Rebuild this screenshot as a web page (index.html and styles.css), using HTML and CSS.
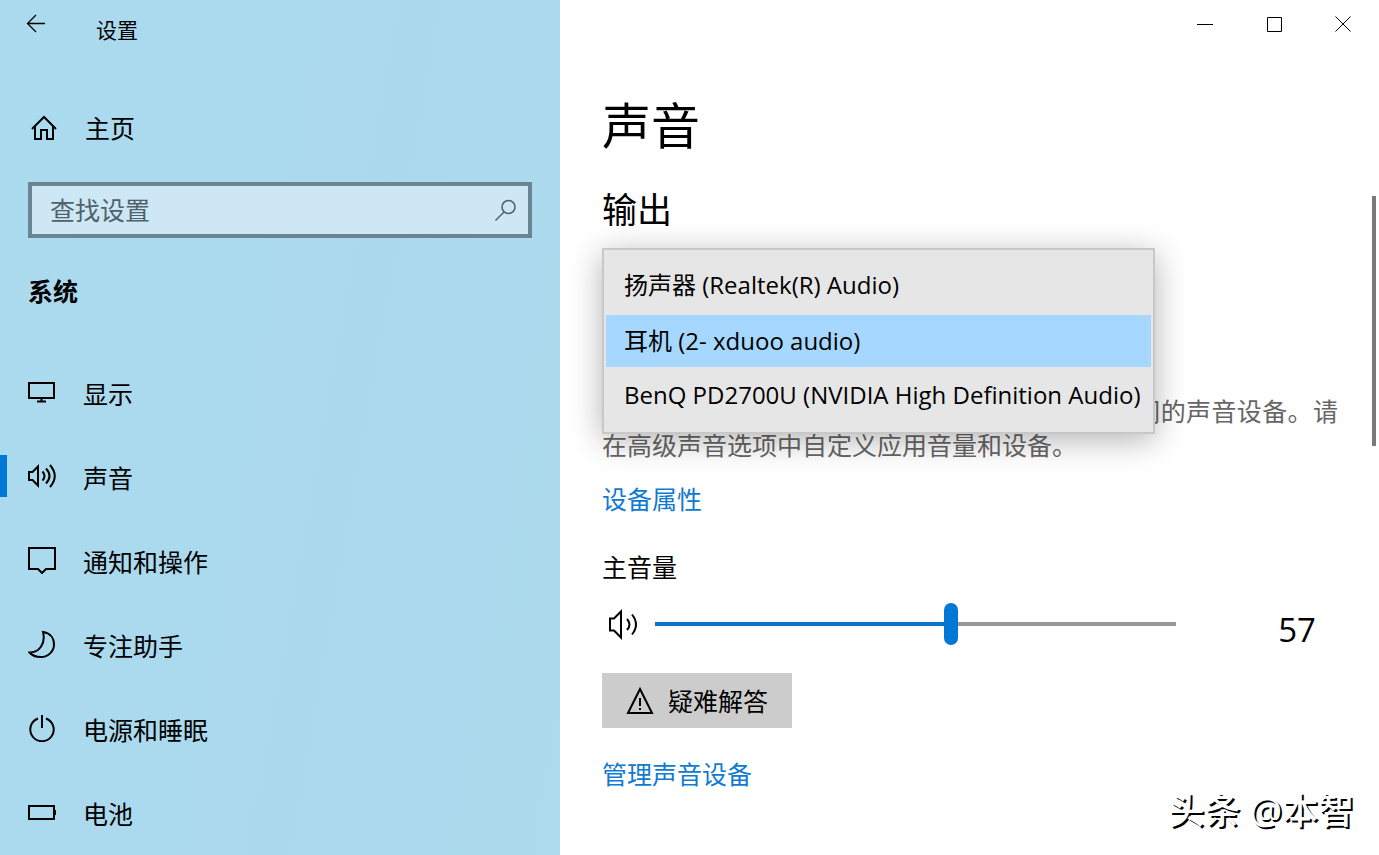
FILE: index.html
```html
<!DOCTYPE html>
<html lang="zh-CN">
<head>
	<meta charset="UTF-8">
	<title>设置</title>
	<link rel="stylesheet" href="styles.css">
</head>
<body>
	<aside class="sidebar">
		<header class="titlebar">
			<button class="back" aria-label="返回">
				<svg width="20" height="20" viewBox="0 0 20 20"><path d="M19 9.500H1.500M10 1L1.500 9.500 10 18"/></svg>
			</button>
			<span class="app-name">设置</span>
		</header>

		<a class="home" href="#home">
			<svg width="28" height="28" viewBox="0 0 28 28"><path d="M2 15L14 3l12 12M5 12.500V25h6v-9h6v9h6V12.500"/></svg>
			主页
		</a>

		<div class="search">
			<input type="search" placeholder="查找设置" aria-label="查找设置">
			<svg width="24" height="24" viewBox="0 0 24 24"><circle cx="15.500" cy="9" r="6.500"/><path d="M11 14l-8.500 8.500"/></svg>
		</div>

		<h2>系统</h2>

		<nav>
			<a href="#display">
				<svg width="28" height="28" viewBox="0 0 28 28"><path d="M1 5h25v15H1zM13.500 20v3M9 23.500h9"/></svg>
				<span>显示</span>
			</a>
			<a class="active" href="#sound">
				<svg width="28" height="28" viewBox="0 0 28 28"><path d="M1 10h3.500L10 4.500v19L4.500 18H1zM14.500 9.500q4 4.500 0 9M18 6.500q7 7.500 0 15M22 3q9.500 11 0 22"/></svg>
				<span>声音</span>
			</a>
			<a href="#notifications">
				<svg width="28" height="28" viewBox="0 0 28 28"><path d="M1 2h26v21h-9l-4 4L10 23H1z"/></svg>
				<span>通知和操作</span>
			</a>
			<a href="#focus">
				<svg width="28" height="28" viewBox="0 0 28 28"><path d="M15 2C22 3 26 8 26 14.500 26 21.500 20 27 13 27 8.500 27 4 25.500 1.500 22.500 11 22.500 18 14 15 2z"/></svg>
				<span>专注助手</span>
			</a>
			<a href="#power">
				<svg width="28" height="28" viewBox="0 0 28 28"><path d="M14 1v13M10 4.500A11.700 11.700 0 1 0 18 4.500"/></svg>
				<span>电源和睡眠</span>
			</a>
			<a href="#battery">
				<svg width="28" height="28" viewBox="0 0 28 28"><path d="M1 8h25v13H1zM27 12v5"/></svg>
				<span>电池</span>
			</a>
		</nav>
	</aside>

	<main>
		<div class="window-controls">
			<button aria-label="最小化"><svg width="16" height="16" viewBox="0 0 16 16"><path d="M0 8.500h16"/></svg></button>
			<button aria-label="最大化"><svg width="16" height="16" viewBox="0 0 16 16"><path d="M1.500 1.500h14v14h-14z"/></svg></button>
			<button aria-label="关闭"><svg width="16" height="16" viewBox="0 0 16 16"><path d="M.5.5l15 15M15.500.5l-15 15"/></svg></button>
		</div>

		<div class="content">
			<h1>声音</h1>
			<h3><label for="output">输出</label></h3>

			<div class="output">
				<select id="output" size="3">
					<option>扬声器 (Realtek(R) Audio)</option>
					<option selected>耳机 (2- xduoo audio)</option>
					<option>BenQ PD2700U (NVIDIA High Definition Audio)</option>
				</select>
			</div>

			<p class="hint">某些应用可能设为使用与此处所选的声音设备不同的声音设备。请在高级声音选项中自定义应用音量和设备。</p>
			<a class="link" href="#device">设备属性</a>

			<label class="volume-label" for="volume">主音量</label>
			<div class="volume">
				<svg width="32" height="32" viewBox="0 0 32 32"><path d="M2 10.500h4l7-7v26l-7-7H2zM19 11q5 5.500 0 11M24 6.500q8 10 0 20"/></svg>
				<input type="range" id="volume" min="0" max="100" value="57">
				<output for="volume">57</output>
			</div>

			<button class="troubleshoot">
				<svg width="28" height="28" viewBox="0 0 28 28"><path d="M14 2l12 24H2zM14 11v8M14 21v2"/></svg>
				疑难解答
			</button>
			<a class="link" href="#manage">管理声音设备</a>
		</div>

		<div class="scrollbar"></div>
		<div class="watermark">头条 @本智</div>
	</main>

	<script>
		const volume = document.getElementById('volume');
		const output = document.querySelector('output');

		volume.oninput = () => {
			volume.style.setProperty('--value', volume.value + '%');
			output.textContent = volume.value;
		};
	</script>
</body>
</html>
```
FILE: styles.css
```css
* {
	box-sizing: border-box;
}
body {
	margin: 0;
	min-height: 100vh;
	display: grid;
	grid-template-columns: 560px 1fr;
	font-family: "Open Sans", "Noto Sans CJK SC", sans-serif;
	font-size: 25px;
	line-height: 34px;
	color: #000;
	background: #fff;
}
svg {
	fill: none;
	stroke: currentColor;
	stroke-width: 2;
	flex-shrink: 0;
}
button {
	font: inherit;
	color: inherit;
	border: none;
	background: none;
	padding: 0;
}
a {
	color: inherit;
	text-decoration: none;
}
h1, h2, h3, p {
	margin: 0;
}

.sidebar {
	background: linear-gradient(100deg, #abdbef, #abd8ed 60%, #aedcee);
}
.titlebar {
	display: flex;
	height: 60px;
	padding-left: 26px;
}
.back {
	width: 20px;
	height: 48px;
}
.back svg {
	display: block;
	stroke-width: 1.3;
}
.app-name {
	margin-left: 50px;
	font-size: 21px;
	line-height: 60px;
}
.home {
	display: flex;
	align-items: center;
	gap: 27px;
	height: 84px;
	margin-top: 26px;
	padding-left: 30px;
}
.search {
	display: flex;
	align-items: center;
	height: 56px;
	margin: 12px 28px 0;
	padding: 0 11px 0 18px;
	border: 4px solid #698591;
	background: #cde7f4;
	color: #4f616a;
}
.search input {
	flex: 1;
	min-width: 0;
	padding: 0;
	border: none;
	outline: none;
	background: none;
	font: inherit;
	color: inherit;
}
.search input::placeholder {
	color: #4f616a;
}
.search svg {
	stroke-width: 1.5;
}
.sidebar h2 {
	margin: 36px 28px 42px;
	font-size: 25px;
	line-height: 34px;
}
nav a {
	display: flex;
	align-items: center;
	gap: 27px;
	height: 84px;
	padding-left: 28px;
	position: relative;
}
nav span {
	padding-top: 3px;
}
.active::before {
	content: "";
	position: absolute;
	left: 0;
	top: 21px;
	width: 7px;
	height: 42px;
	background: #0078d7;
}

main {
	position: relative;
}
.window-controls {
	display: flex;
	justify-content: flex-end;
	height: 48px;
	padding-right: 2px;
}
.window-controls button {
	width: 69px;
}
.window-controls svg {
	display: block;
	margin: auto;
	stroke-width: 1;
}
.content {
	padding: 43px 41px 0 42px;
}
h1 {
	font-size: 49px;
	font-weight: normal;
	line-height: 68px;
}
h3 {
	margin-top: 26px;
	font-size: 35px;
	font-weight: normal;
	line-height: 50px;
}

/* the open list hangs over the text below it */
.output {
	position: relative;
	height: 159px;
}
.output select {
	position: absolute;
	top: 13px;
	left: 0;
	width: 553px;
	height: 186px;
	padding: 9px 2px;
	border: 2px solid #c8c8c8;
	border-radius: 0;
	outline: none;
	overflow: hidden;
	appearance: none;
	background: #e6e6e6;
	box-shadow: 0 6px 30px rgba(0, 0, 0, 0.3);
	font: inherit;
	font-size: 24px;
	color: #000;
}
.output option {
	height: 52px;
	margin-bottom: 4px;
	padding: 7px 18px;
	color: #000;
}
.output option:checked {
	background: #a6d8ff linear-gradient(#a6d8ff, #a6d8ff);
}
.hint {
	color: #666;
	text-align: justify;
}
.link {
	display: block;
	margin-top: 20px;
	color: #0f7ad1;
}
.volume-label {
	display: block;
	margin-top: 34px;
}
.volume {
	display: flex;
	align-items: center;
	height: 60px;
	margin-top: 10px;
	padding-left: 6px;
}
.volume input {
	flex: 1;
	min-width: 0;
	height: 42px;
	margin: 0 0 0 15px;
	appearance: none;
	background: none;
	--value: 57%;
}
.volume input::-webkit-slider-runnable-track {
	height: 4px;
	background: linear-gradient(90deg, #0f74c8 var(--value), #999 var(--value));
}
.volume input::-webkit-slider-thumb {
	appearance: none;
	width: 14px;
	height: 42px;
	margin-top: -19px;
	border-radius: 7px;
	background: #0078d7;
}
.volume output {
	width: 162px;
	padding: 12px 22px 0 0;
	font-size: 33px;
	text-align: right;
}
.troubleshoot {
	display: flex;
	align-items: center;
	gap: 14px;
	height: 55px;
	margin-top: 19px;
	padding: 0 24px;
	background: #ccc;
}
.troubleshoot + .link {
	margin-top: 29px;
}
.scrollbar {
	position: absolute;
	top: 196px;
	right: 3px;
	width: 4px;
	height: 250px;
	background: #7a7a7a;
}
.watermark {
	position: absolute;
	right: 25px;
	bottom: 20px;
	font-size: 36px;
	font-weight: 500;
	line-height: 48px;
	color: #fff;
	text-shadow: 2px 2px 0 #000;
}
```
